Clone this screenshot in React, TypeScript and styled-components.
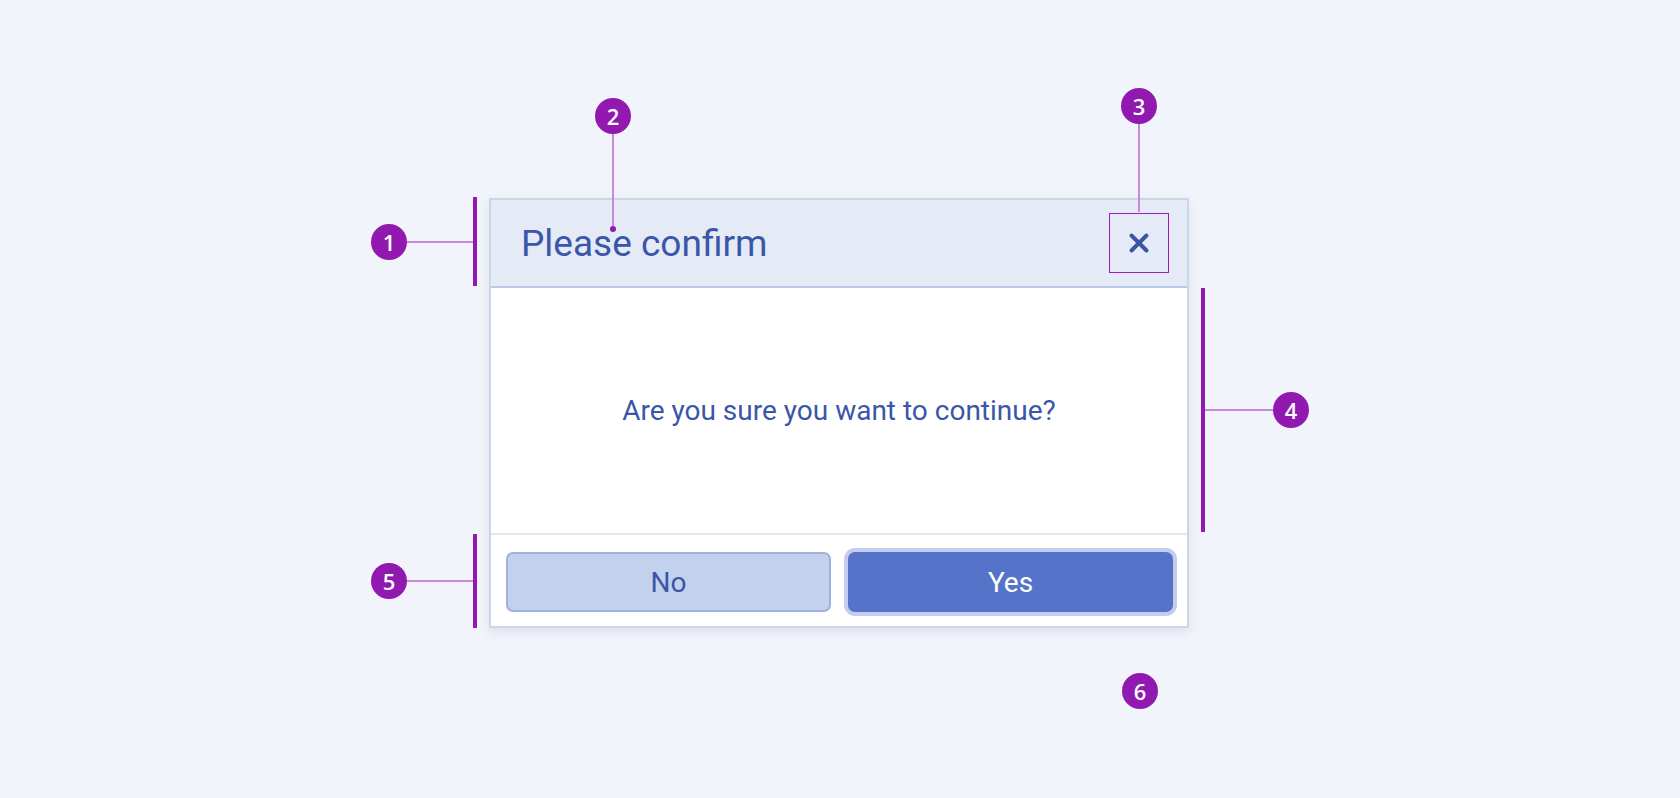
import styled, { createGlobalStyle } from "styled-components";

const GlobalStyle = createGlobalStyle`
  html, body {
    margin: 0;
    padding: 0;
    background: #f1f4fa;
  }
  body {
    font-family: Roboto, "Liberation Sans", sans-serif;
  }
`;

const Page = styled.div`
  width: 1680px;
  height: 798px;
  display: flex;
  justify-content: center;
  align-items: flex-start;
  padding-top: 198px;
  box-sizing: border-box;
  overflow: hidden;
`;

const Stage = styled.div`
  position: relative;
  margin-left: -2px;
`;

const Dialog = styled.div`
  width: 700px;
  box-sizing: border-box;
  border: 2px solid #cdd5ea;
  background: #ffffff;
  box-shadow: 0 4px 10px rgba(40, 60, 110, 0.1);
  display: flex;
  flex-direction: column;
`;

const Header = styled.div`
  height: 86px;
  display: flex;
  align-items: center;
  justify-content: space-between;
  padding: 0 18px 0 30px;
  background: #e4eaf6;
  border-bottom: 2px solid #bac8e5;
`;

const Title = styled.h2`
  margin: 0;
  font-size: 37px;
  font-weight: 400;
  color: #3a56a8;
`;

const CloseButton = styled.button`
  width: 60px;
  height: 60px;
  padding: 0;
  display: flex;
  align-items: center;
  justify-content: center;
  background: transparent;
  border: 1px solid #9a1fb8;
  cursor: pointer;
`;

const Body = styled.div`
  height: 245px;
  display: flex;
  align-items: center;
  justify-content: center;
  border-bottom: 2px solid #e6e7ec;
`;

const Message = styled.p`
  margin: 0;
  font-size: 28px;
  color: #3a56a8;
`;

const Footer = styled.div`
  display: flex;
  gap: 17px;
  padding: 17px 14px 14px 15px;
`;

const Button = styled.button<{ $primary?: boolean }>`
  flex: 1;
  height: 60px;
  font-family: Roboto, "Liberation Sans", sans-serif;
  font-size: 28px;
  border-radius: 7px;
  cursor: pointer;
  box-sizing: border-box;
  color: ${(p) => (p.$primary ? "#ffffff" : "#3a56a8")};
  background: ${(p) => (p.$primary ? "#5573c9" : "#c2d1ec")};
  border: 2px solid ${(p) => (p.$primary ? "#5573c9" : "#9fb2dc")};
  box-shadow: ${(p) => (p.$primary ? "0 0 0 4px #c4ccf0" : "none")};
`;

/* callouts: each one is a small flex group pinned next to the dialog */
const Callout = styled.div<{ $x: number; $y: number; $dir: "row" | "column" }>`
  position: absolute;
  left: ${(p) => p.$x}px;
  top: ${(p) => p.$y}px;
  display: flex;
  flex-direction: ${(p) => p.$dir};
  align-items: center;
`;

const Badge = styled.div`
  flex: none;
  width: 36px;
  height: 36px;
  border-radius: 50%;
  background: #9119b0;
  color: #ffffff;
  font-family: "Open Sans", "Noto Sans", sans-serif;
  font-weight: 600;
  font-size: 22px;
  display: flex;
  align-items: center;
  justify-content: center;
  line-height: 1;
`;

const Bracket = styled.div<{ $h: number }>`
  flex: none;
  width: 4px;
  height: ${(p) => p.$h}px;
  background: #9119b0;
`;

const Leader = styled.div<{ $len: number; $vertical?: boolean }>`
  flex: none;
  width: ${(p) => (p.$vertical ? 2 : p.$len)}px;
  height: ${(p) => (p.$vertical ? p.$len : 2)}px;
  background: #c88ad8;
`;

const Dot = styled.div`
  flex: none;
  width: 6px;
  height: 6px;
  border-radius: 50%;
  background: #9119b0;
`;

const CloseIcon = () => (
  <svg width="22" height="22" viewBox="0 0 22 22">
    <path
      d="M3.5 3.5 L18.5 18.5 M18.5 3.5 L3.5 18.5"
      stroke="#3a56a8"
      strokeWidth="4"
      strokeLinecap="round"
      fill="none"
    />
  </svg>
);

export default function App() {
  return (
    <>
      <GlobalStyle />
      <Page>
        <Stage>
          <Dialog>
            <Header>
              <Title>Please confirm</Title>
              <CloseButton aria-label="Close">
                <CloseIcon />
              </CloseButton>
            </Header>
            <Body>
              <Message>Are you sure you want to continue?</Message>
            </Body>
            <Footer>
              <Button>No</Button>
              <Button $primary>Yes</Button>
            </Footer>
          </Dialog>

          <Callout $x={-118} $y={-1} $dir="row">
            <Badge>1</Badge>
            <Leader $len={66} />
            <Bracket $h={89} />
          </Callout>

          <Callout $x={106} $y={-100} $dir="column">
            <Badge>2</Badge>
            <Leader $vertical $len={92} />
            <Dot />
          </Callout>

          <Callout $x={632} $y={-110} $dir="column">
            <Badge>3</Badge>
            <Leader $vertical $len={88} />
          </Callout>

          <Callout $x={712} $y={90} $dir="row">
            <Bracket $h={244} />
            <Leader $len={68} />
            <Badge>4</Badge>
          </Callout>

          <Callout $x={-118} $y={336} $dir="row">
            <Badge>5</Badge>
            <Leader $len={66} />
            <Bracket $h={94} />
          </Callout>

          <Callout $x={633} $y={475} $dir="row">
            <Badge>6</Badge>
          </Callout>
        </Stage>
      </Page>
    </>
  );
}
